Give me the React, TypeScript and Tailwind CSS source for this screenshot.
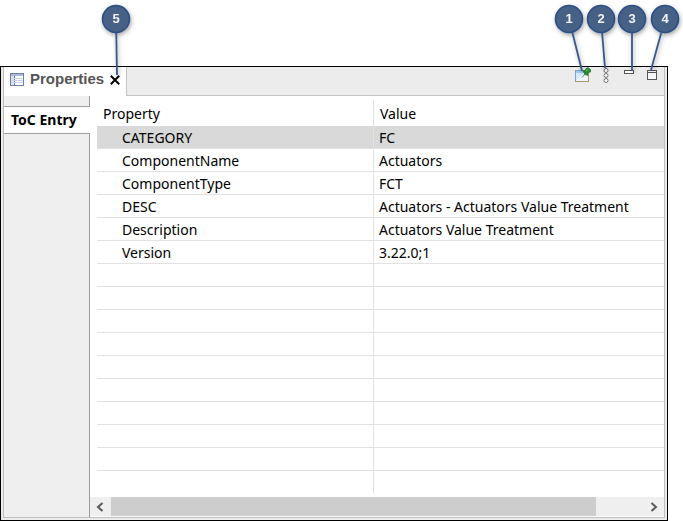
import { useState } from "react";
import clsx from "clsx";

interface Property {
  name: string;
  value: string;
}

interface CalloutProps {
  label: string;
  className: string;
  x: number;
  y: number;
}

const PROPERTIES: Property[] = [
  { name: "CATEGORY", value: "FC" },
  { name: "ComponentName", value: "Actuators" },
  { name: "ComponentType", value: "FCT" },
  { name: "DESC", value: "Actuators - Actuators Value Treatment" },
  { name: "Description", value: "Actuators Value Treatment" },
  { name: "Version", value: "3.22.0;1" },
];

const EMPTY_ROWS = 9;

// Numbered badge with a leader line that ends at (x, y), measured from the badge centre
function Callout({ label, className, x, y }: CalloutProps) {
  const length = Math.hypot(x, y);
  return (
    <svg
      className={clsx("pointer-events-none absolute overflow-visible drop-shadow-[1px_2px_2px_rgba(0,0,0,0.35)]", className)}
      width="30"
      height="30"
      viewBox="-15 -15 30 30"
    >
      <line x1={(x * 14) / length} y1={(y * 14) / length} x2={x} y2={y} stroke="#35588d" strokeWidth="1.8" />
      <circle r="13.5" fill="#476086" stroke="#2b4f87" strokeWidth="1.6" />
      <text y="4" textAnchor="middle" fill="#f1f4f8" className="font-['Liberation_Sans',sans-serif] text-[13px] font-bold">
        {label}
      </text>
    </svg>
  );
}

function TableIcon() {
  return (
    <svg width="14" height="13" viewBox="0 0 14 13" shapeRendering="crispEdges">
      <rect width="14" height="13" fill="#6d7fa8" />
      <rect x="1" y="1" width="12" height="2" fill="#a9b9d6" />
      <rect x="1" y="3" width="3" height="9" fill="#dbe5f4" />
      <rect x="5" y="3" width="8" height="9" fill="#fff" />
      <path d="M1 5.5H13M1 7.5H13M1 9.5H13" stroke="#ccd5e6" />
    </svg>
  );
}

function PinIcon() {
  return (
    <svg width="16" height="16" viewBox="0 0 16 16">
      <rect x=".5" y="3.5" width="13" height="11" fill="#d3ecfb" stroke="#a99766" />
      <path d="M1 4H9V6H1Z" fill="#9fcdf0" />
      <path d="M.5 14V3.5H8" fill="none" stroke="#7ba4c8" />
      <path d="M1 14L9 6L13 8V14Z" fill="#fff" opacity=".6" />
      <path d="M7 10.5L10 7" stroke="#6d7f8c" />
      <path d="M8 4L10 3.5L11 1.5L13 .5L16 3L15.500 5L13.500 5.500L12.500 8.500L10 7.500Z" fill="#2c8d32" stroke="#176d24" strokeWidth=".6" />
      <path d="M11 4L13 2.500" stroke="#79cc68" />
    </svg>
  );
}

function MenuIcon() {
  return (
    <svg width="6" height="16" viewBox="0 0 6 16" fill="#fff" stroke="#707070">
      <circle cx="3" cy="2.5" r="2" />
      <circle cx="3" cy="7.5" r="2" />
      <circle cx="3" cy="12.5" r="2" />
    </svg>
  );
}

function MinimizeIcon() {
  return (
    <svg width="10" height="10" viewBox="0 0 10 10" fill="#fff" stroke="#56565c">
      <rect x=".5" y=".5" width="9" height="3" />
    </svg>
  );
}

function MaximizeIcon() {
  return (
    <svg width="10" height="10" viewBox="0 0 10 10" fill="#f7f7f7" stroke="#56565c">
      <rect x=".5" y=".5" width="9" height="9" />
      <path d="M0 2.5H10" />
    </svg>
  );
}

function ScrollArrow({ label, d }: { label: string; d: string }) {
  return (
    <button aria-label={label} className="grid w-5 place-items-center" type="button">
      <svg width="8" height="10" viewBox="0 0 8 10" fill="none" stroke="#595959" strokeWidth="2">
        <path d={d} />
      </svg>
    </button>
  );
}

function TabBar() {
  return (
    <div className="flex h-[29px]">
      <div className="flex w-[123px] items-start border-r border-[#c4c4c4] bg-white pl-[6px]">
        <div className="flex h-6 items-center">
          <TableIcon />
          <h1 className="ml-[6px] font-['Liberation_Sans',Arial,sans-serif] text-[15px] font-bold text-[#555]">Properties</h1>
        </div>
        <button aria-label="Close" className="relative mt-2 ml-[6px]" type="button">
          <svg width="10" height="10" viewBox="0 0 10 10" stroke="#000" strokeWidth="2">
            <path d="M.8 .8L9.2 9.2M9.2 .8L.8 9.2" />
          </svg>
          <Callout className="top-[-71px] left-[-9px]" label="5" x={1} y={56} />
        </button>
      </div>
      <div className="flex flex-1 items-start justify-end border-b border-[#c4c4c4] bg-[#ececec] pr-[7px]">
        <button aria-label="Pin to selection" className="relative mr-[12px]" type="button">
          <PinIcon />
          <Callout className="top-[-63px] left-[-21px]" label="1" x={13} y={52} />
        </button>
        <button aria-label="View menu" className="relative mt-px mr-[15px]" type="button">
          <MenuIcon />
          <Callout className="top-[-64px] left-[-17px]" label="2" x={4} y={49} />
        </button>
        <button aria-label="Minimize" className="relative mt-[3px] mr-[13px]" type="button">
          <MinimizeIcon />
          <Callout className="top-[-66px] left-[-7px]" label="3" x={0} y={51} />
        </button>
        <button aria-label="Maximize" className="relative mt-[3px]" type="button">
          <MaximizeIcon />
          <Callout className="top-[-66px] left-[3px]" label="4" x={-14} y={51} />
        </button>
      </div>
    </div>
  );
}

export default function App() {
  const [selected, setSelected] = useState("CATEGORY");

  return (
    <main className="bg-white pt-[66px] pr-[15px] font-['Noto_Sans','Segoe_UI',sans-serif] text-[14px] text-black">
      <section className="border border-black bg-[#ececec] px-[2px] pb-[2px]">
        <div className="border-x border-b border-[#bfbcbc] bg-white">
          <TabBar />
          <div className="flex">
            <nav className="flex w-[86px] flex-col">
              <div className="h-[11px] border-r border-b border-[#9d9d9d] bg-[#efefef]" />
              <button className="h-[26px] pb-[2px] pl-[7px] text-left font-bold whitespace-nowrap" type="button">
                ToC Entry
              </button>
              <div className="flex-1 border-t border-r border-[#9d9d9d] bg-[#efefef]" />
            </nav>
            <div className="min-w-0 flex-1">
              <div className="pt-1 pl-[7px]">
                <table className="w-full table-fixed border-separate border-spacing-0 text-left">
                  <thead>
                    <tr className="h-[26px]">
                      <th className="w-[277px] border-r border-[#e2e2e2] p-0 pl-[6px] font-normal">Property</th>
                      <th className="p-0 pl-[6px] font-normal">Value</th>
                    </tr>
                  </thead>
                  <tbody>
                    {PROPERTIES.map((property) => (
                      <tr
                        className={clsx(
                          "h-[23px] leading-[20px] whitespace-nowrap",
                          selected === property.name && "bg-[#d9d9d9]",
                        )}
                        key={property.name}
                        onClick={() => setSelected(property.name)}
                      >
                        <td className="border-r border-b border-[#e2e2e2] p-0 pt-[2px] pl-[25px]">{property.name}</td>
                        <td className="border-b border-[#e2e2e2] p-0 pt-[2px] pl-[5px]">{property.value}</td>
                      </tr>
                    ))}
                    {Array.from({ length: EMPTY_ROWS }, (_, index) => (
                      <tr className="h-[23px]" key={index}>
                        <td className="border-r border-b border-[#e2e2e2] p-0" />
                        <td className="border-b border-[#e2e2e2] p-0" />
                      </tr>
                    ))}
                    <tr className="h-[22px]">
                      <td className="border-r border-[#e2e2e2] p-0" />
                      <td className="p-0" />
                    </tr>
                  </tbody>
                </table>
              </div>
              <div className="mt-1 mb-px flex h-[19px] bg-[#efefef]">
                <ScrollArrow d="M6.5 1L2 5L6.5 9" label="Scroll left" />
                <div className="flex flex-1 pl-px">
                  <div className="w-[91%] bg-[#cdcdcd]" />
                </div>
                <ScrollArrow d="M1.5 1L6 5L1.5 9" label="Scroll right" />
              </div>
            </div>
          </div>
        </div>
      </section>
    </main>
  );
}
